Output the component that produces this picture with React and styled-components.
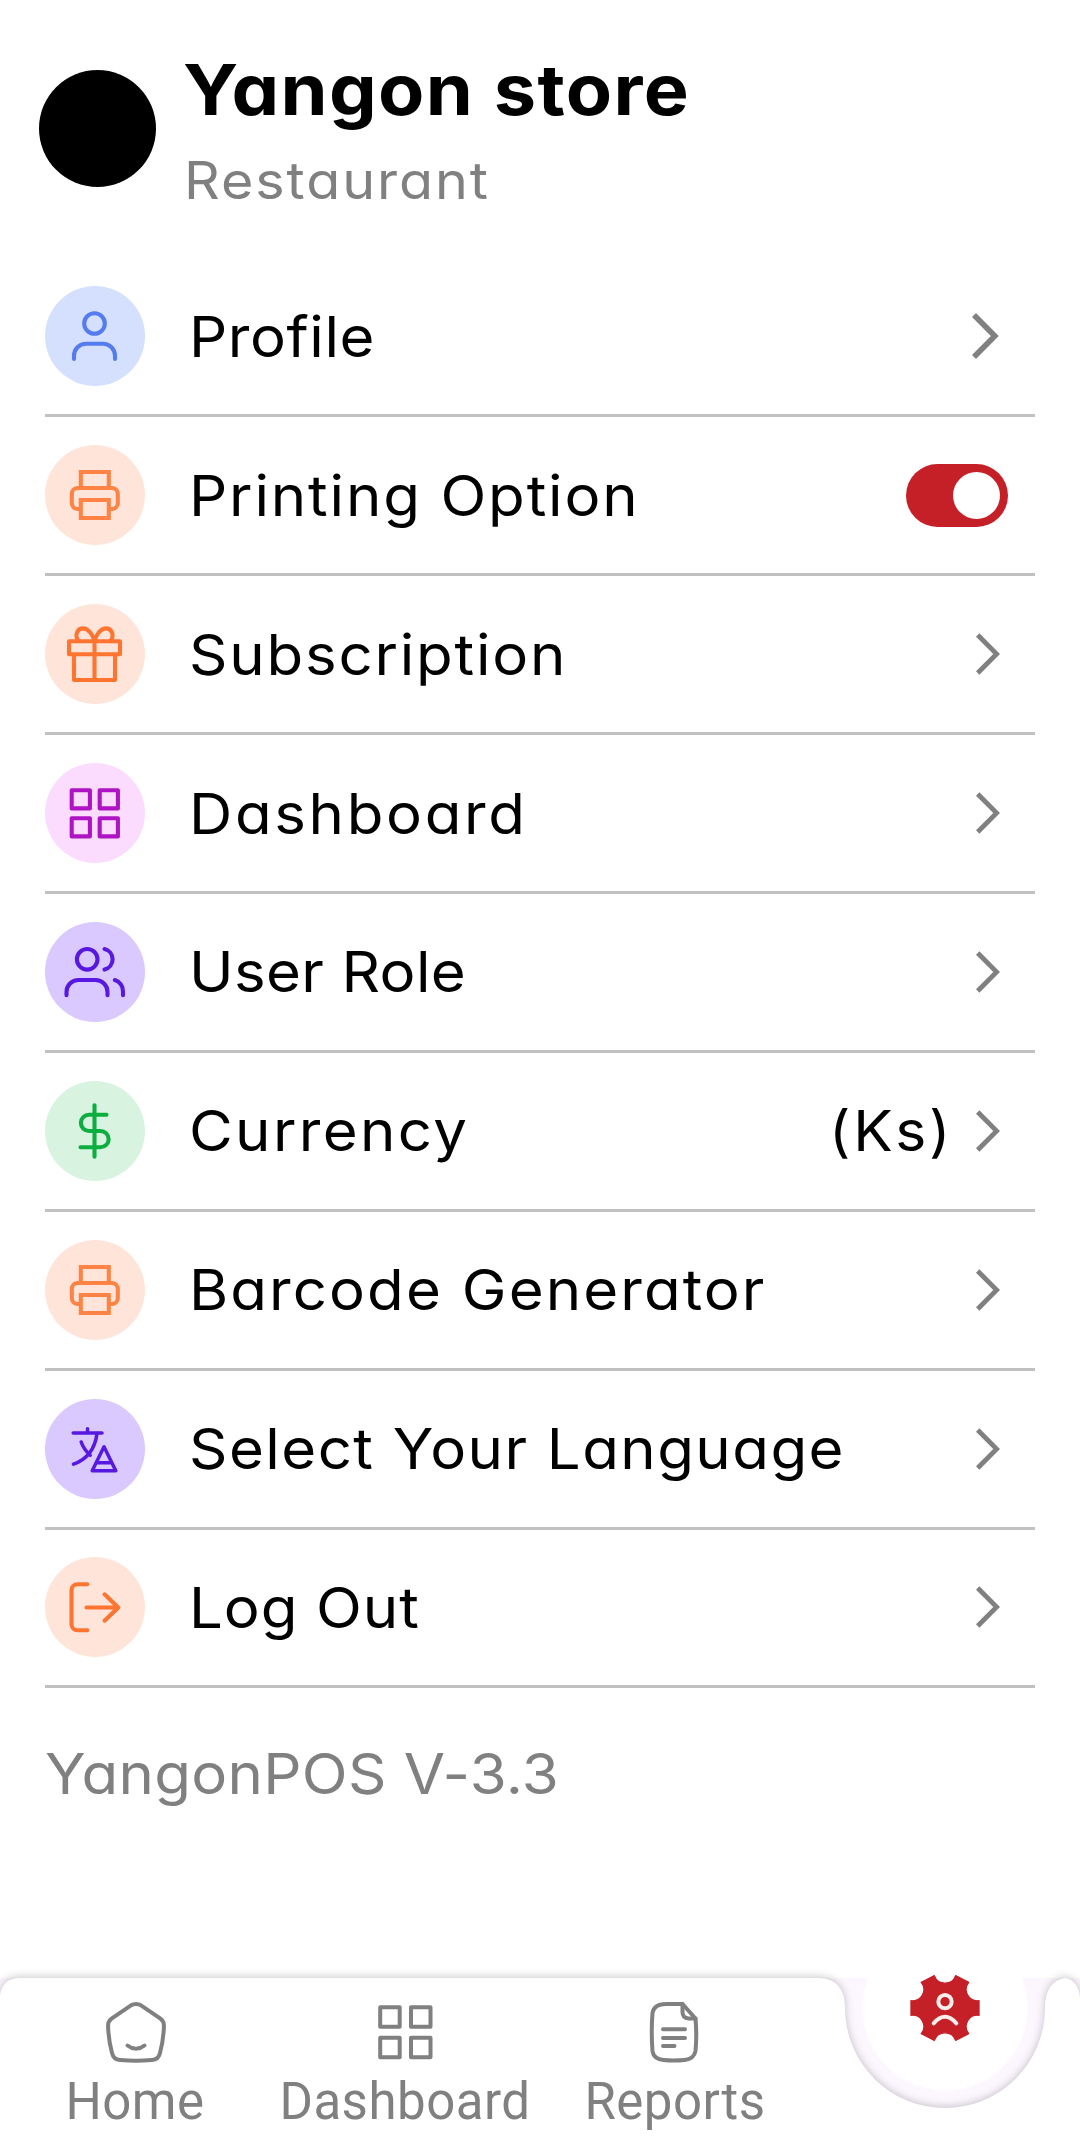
import React from 'react';
import styled, { createGlobalStyle } from 'styled-components';

const Theme = {
    white: '#ffffff',
    black: '#000000',
    grey: '#808080',
    line: '#c1c1c1',
    primary: '#c52027',
    surface: '#fcf6fe',
};

const GlobalStyle = createGlobalStyle`
    * {
        box-sizing: border-box;
    }

    body {
        margin: 0;

        font-family: Inter, "Open Sans", sans-serif;
        font-feature-settings: "cv11", "calt" 0;
        background-color: ${Theme.white};
    }
`;

const Page = styled.div`
    width: 1080px;
    height: 2153px;

    display: flex;
    flex-direction: column;

    overflow: hidden;
    background-color: ${Theme.white};
`;

const Header = styled.header`
    height: 258.4px;
    padding: 50px 0 0 39px;

    display: flex;
    align-items: flex-start;
`;

const Header__Avatar = styled.div`
    margin: 20px 28px 0 0;
    width: 117px;
    height: 117px;

    border-radius: 50%;
    background-color: ${Theme.black};
`;

const Header__Title = styled.h1`
    margin: 0 0 0 -1px;

    font-size: 70px;
    line-height: 80px;
    font-weight: 700;
    letter-spacing: 1.3px;
    white-space: nowrap;

    transform: scaleX(1.08);
    transform-origin: left;
`;

const Header__Subtitle = styled.div`
    margin-top: 11px;

    font-size: 52px;
    line-height: 80px;
    letter-spacing: 1.8px;
    color: ${Theme.grey};

    transform: scaleX(1.07);
    transform-origin: left;
`;

const List = styled.main`
    padding: 0 45px;

    display: flex;
    flex-direction: column;
`;

const Row = styled.div`
    height: 158.9px;

    display: flex;
    align-items: center;

    border-bottom: 3px solid ${Theme.line};
`;

const Row__Icon = styled.span`
    width: 100px;
    height: 100px;
    flex: none;

    color: ${props => props.color};
    border-radius: 50%;
    background-color: ${props => props.$tint};

    & svg {
        display: block;
    }
`;

const Row__Label = styled.span`
    margin-left: 44px;
    padding-top: 1px;

    font-size: 56px;
    line-height: 76px;
    letter-spacing: ${props => props.$spacing}px;
    white-space: nowrap;
    color: ${Theme.black};

    transform: scaleX(1.07);
    transform-origin: left;
`;

const Row__End = styled.span`
    margin-left: auto;

    display: flex;
    align-items: center;
`;

const Row__Value = styled.span`
    margin-right: 23px;

    font-size: 56px;
    line-height: 76px;
    letter-spacing: 2.5px;

    transform: scaleX(1.05);
    transform-origin: right;
`;

const Row__Chevron = styled.svg`
    margin-right: ${props => (props.$large ? 36 : 35)}px;
    flex: none;

    fill: none;
    stroke: ${Theme.grey};
`;

const Toggle = styled.span`
    margin-right: 27px;
    padding: 8px;
    width: 102px;
    height: 63px;

    display: flex;
    justify-content: ${props => (props.$active ? 'flex-end' : 'flex-start')};

    border-radius: 32px;
    background-color: ${Theme.primary};
`;

const Toggle__Knob = styled.span`
    width: 47px;
    height: 47px;

    border-radius: 50%;
    background-color: ${Theme.white};
`;

const Version = styled.div`
    margin: 48px 0 0 45px;

    font-size: 56px;
    line-height: 76px;
    letter-spacing: .3px;
    color: ${Theme.grey};

    transform: scaleX(1.07);
    transform-origin: left;
`;

const NavBar = styled.nav`
    position: relative;

    margin-top: auto;
    height: 175px;
    flex: none;

    display: grid;
    grid-template-columns: repeat(4, 270px);

    font-family: Roboto, sans-serif;
    background-color: ${Theme.surface};
`;

const Nav__Shape = styled.svg`
    position: absolute;
    top: 0;
    left: 0;

    overflow: visible;
    fill: ${Theme.white};
    filter: drop-shadow(0 -1px 4px rgba(0, 0, 0, .22));
`;

const Nav__Bubble = styled.span`
    position: absolute;
    top: -52px;
    left: 863px;

    width: 164px;
    height: 164px;

    border-radius: 50%;
    background-color: ${Theme.white};
    box-shadow: 0 0 5px ${Theme.white};
`;

const Nav__Item = styled.a`
    position: relative;

    padding-top: 21px;

    display: flex;
    flex-direction: column;
    align-items: center;

    font-size: 51px;
    line-height: 60px;
    letter-spacing: .5px;
    color: ${Theme.grey};

    & svg {
        margin-bottom: 7px;
        flex: none;
    }
`;

const Nav__Active = styled.span`
    position: relative;

    display: flex;
    justify-content: center;
    align-items: flex-start;

    & svg {
        margin-top: -4px;
    }
`;

const icons = {
    user: (
        <>
            <circle cx="50" cy="37.5" r="10.3" />
            <path d="M29.5 73v-3.2a12 12 0 0 1 12-12h17a12 12 0 0 1 12 12V73" />
        </>
    ),
    printer: (
        <g strokeLinecap="butt" strokeLinejoin="miter">
            <path d="M36.3 43V27h28v16" />
            <path d="M36.3 64h-3a6 6 0 0 1-6-6v-9a6 6 0 0 1 6-6h34a6 6 0 0 1 6 6v9a6 6 0 0 1-6 6h-3" />
            <path d="M36.3 55h28v18h-28z" />
        </g>
    ),
    gift: (
        <>
            <path d="M24.5 37.2h51v13h-51zM29.5 50.2h41V76h-41zM50 37.2V76" />
            <path d="M34 37C29.5 31 33 24.4 38.5 24.4 44 24.4 48.5 31 50 37" />
            <path d="M66 37c4.5-6 1-12.6-4.5-12.6C56 24.4 51.5 31 50 37" />
        </>
    ),
    grid: <path d="M27.2 27.2h18.2v18.2H27.2zM55.2 27.2h18.2v18.2H55.2zM27.2 55.2h18.2v18.2H27.2zM55.2 55.2h18.2v18.2H55.2z" />,
    users: (
        <>
            <circle cx="42.7" cy="37.3" r="10.3" />
            <path d="M22 73.2V70a12 12 0 0 1 12-12h17a12 12 0 0 1 12 12v3.2" />
            <path d="M60 27a10.6 10.6 0 0 1 0 20.6M70.3 58a11.5 11.5 0 0 1 8.2 11.5v3.7" />
        </>
    ),
    dollar: (
        <>
            <path d="M50 24.3v51.4" />
            <path d="M62 33.7H44.5a8.15 8.15 0 0 0 0 16.3H56a8.15 8.15 0 0 1 0 16.3H36" />
        </>
    ),
    language: (
        <g strokeWidth="3.5">
            <path d="M43 29.7V34M28.7 34h28.8" />
            <path d="M52.5 34.5C50.5 50 42 60.5 29 65.2M36.7 43c1.5 4.5 5 9.5 9 13.2" />
            <path d="M59.5 47.7 47.7 71.7h23.6zM53 63.7h13.5" />
        </g>
    ),
    logout: (
        <>
            <path d="M42.8 27.3H33a6 6 0 0 0-6 6v34a6 6 0 0 0 6 6h9.8" />
            <path d="M42 50.5h31.5M60 37.3l13.8 13.2L60 63.7" />
        </>
    ),
};

const rows = [
    { icon: 'user', color: '#557bf0', tint: '#d5e0fe', text: 'Profile', spacing: 0.55, large: true },
    { icon: 'printer', color: '#ff8345', tint: '#ffe5d9', text: 'Printing Option', spacing: 1.73, toggle: true },
    { icon: 'gift', color: '#ff7431', tint: '#ffe5d9', text: 'Subscription', spacing: 1.69 },
    { icon: 'grid', color: '#ae14c4', tint: '#fbdcfe', text: 'Dashboard', spacing: 2.5 },
    { icon: 'users', color: '#5718e0', tint: '#dac9ff', text: 'User Role', spacing: 0.37 },
    { icon: 'dollar', color: '#0cae40', tint: '#d9f3e1', text: 'Currency', spacing: 2.2, value: '(Ks)' },
    { icon: 'printer', color: '#ff8345', tint: '#ffe5d9', text: 'Barcode Generator', spacing: 1.96 },
    { icon: 'language', color: '#5718e0', tint: '#dac9ff', text: 'Select Your Language', spacing: 1.36 },
    { icon: 'logout', color: '#ff7431', tint: '#ffe5d9', text: 'Log Out', spacing: 0.86 },
];

const Chevron = ({ large }) => (
    large ? (
        <Row__Chevron $large width="27" height="48" viewBox="0 0 27 48" strokeWidth="5.6">
            <path d="M2 3l20.8 21L2 45" />
        </Row__Chevron>
    ) : (
        <Row__Chevron width="24" height="42" viewBox="0 0 24 42" strokeWidth="4.8">
            <path d="M1.7 2l19 19-19 19" />
        </Row__Chevron>
    )
);

const MenuRow = ({ icon, color, tint, text, spacing, value, toggle, large }) => (
    <Row>
        <Row__Icon color={color} $tint={tint}>
            <svg width="100" height="100" viewBox=".5 0 100 100" fill="none" stroke="currentColor" strokeWidth="4.1" strokeLinecap="round" strokeLinejoin="round">
                {icons[icon]}
            </svg>
        </Row__Icon>
        <Row__Label $spacing={spacing}>{text}</Row__Label>
        <Row__End>
            {value && <Row__Value>{value}</Row__Value>}
            {toggle ? <Toggle $active><Toggle__Knob /></Toggle> : <Chevron large={large} />}
        </Row__End>
    </Row>
);

const NavIcon = ({ children }) => (
    <svg width="66" height="66" viewBox="0 0 66 66" fill="none" stroke="currentColor" strokeWidth="4" strokeLinecap="round" strokeLinejoin="round">
        {children}
    </svg>
);

const Nav = () => (
    <NavBar>
        <Nav__Bubble />
        <Nav__Shape width="1080" height="175" viewBox="0 0 1080 175">
            <path d="M0 18Q2 0 20 0H817C838 0 845 13 845 30A100 100 0 0 0 1045 30C1045 12 1052 2 1065 0Q1078 2 1080 20V175H0Z" />
        </Nav__Shape>
        <Nav__Item>
            <NavIcon>
                <path d="M29 6.3Q34 3.5 39 6.3L58.5 19.7Q62.2 22.5 61.9 27.5Q61.5 41 58 54Q56.5 60.5 50 61Q34 62.3 18 61Q11.5 60.5 10 54Q6.5 41 6.1 27.5Q5.8 22.5 9.5 19.7Z" />
                <path d="M25.5 46.5Q34 53 42.5 46.5" />
            </NavIcon>
            Home
        </Nav__Item>
        <Nav__Item>
            <NavIcon>
                <path d="M8.2 8.2h19.5v19.5H8.2zM39 8.2h19.5v19.5H39zM8.2 38.8h19.5v19.5H8.2zM39 38.8h19.5v19.5H39z" />
            </NavIcon>
            Dashboard
        </Nav__Item>
        <Nav__Item>
            <NavIcon>
                <path d="M40.5 5H24Q12 5 10.500 14Q9 33 10.500 52Q11.500 60 21.500 61Q31.500 62 42.500 61Q52 60 53.500 52Q55 36 53.500 19.500Z" />
                <path d="M40.5 5V13Q40.500 19 46.500 19.500H53.500" />
                <path d="M21 30.3H43M21 39H43M21 47H32.500" />
            </NavIcon>
            Reports
        </Nav__Item>
        <Nav__Active>
            <svg width="70" height="68" viewBox="-105 -102 210 204">
                <path
                    fill={Theme.primary}
                    stroke={Theme.primary}
                    strokeWidth="4"
                    strokeLinejoin="round"
                    d="M-102-22-102 22A34 34 0 0 1-71 77L-32 97A34 34 0 0 1 32 97L71 77A34 34 0 0 1 102 22V-22A34 34 0 0 1 71-77L32-97A34 34 0 0 1-32-97L-71-77A34 34 0 0 1-102-22Z"
                />
                <g fill="none" stroke="#fdecea" strokeWidth="12" strokeLinecap="round">
                    <circle cx="0" cy="-19" r="20" />
                    <path d="M-34 46Q0 7 34 46" />
                </g>
            </svg>
        </Nav__Active>
    </NavBar>
);

const App = () => (
    <Page>
        <GlobalStyle />
        <Header>
            <Header__Avatar />
            <div>
                <Header__Title>Yangon store</Header__Title>
                <Header__Subtitle>Restaurant</Header__Subtitle>
            </div>
        </Header>
        <List>
            {rows.map(row => <MenuRow key={row.text} {...row} />)}
        </List>
        <Version>YangonPOS V-3.3</Version>
        <Nav />
    </Page>
);

export default App;
